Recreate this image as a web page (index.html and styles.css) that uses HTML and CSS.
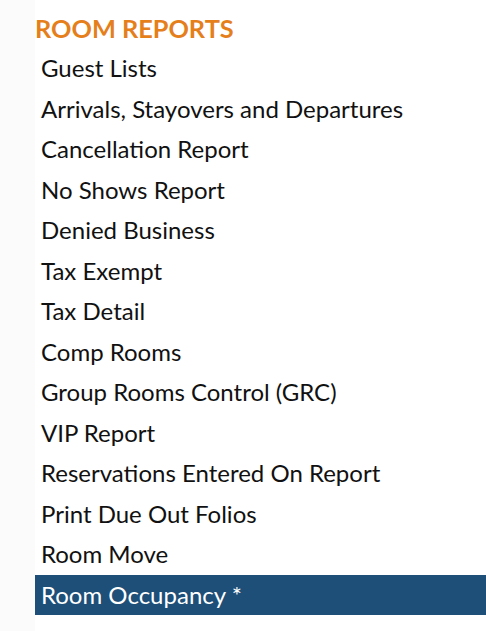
FILE: index.html
```html
<!DOCTYPE html>
<html>
<head>
  <meta name="viewport" content="width=device-width, initial-scale=1">
  <title>Room Reports</title>
  <link rel="stylesheet" href="styles.css">
</head>
<body>
  <div class="gutter"></div>
  <div class="reports">
    <h2 class="reports-title">ROOM REPORTS</h2>
    <ul class="report-list">
      <li class="report-item">Guest Lists</li>
      <li class="report-item">Arrivals, Stayovers and Departures</li>
      <li class="report-item">Cancellation Report</li>
      <li class="report-item">No Shows Report</li>
      <li class="report-item">Denied Business</li>
      <li class="report-item">Tax Exempt</li>
      <li class="report-item">Tax Detail</li>
      <li class="report-item">Comp Rooms</li>
      <li class="report-item">Group Rooms Control (GRC)</li>
      <li class="report-item">VIP Report</li>
      <li class="report-item">Reservations Entered On Report</li>
      <li class="report-item">Print Due Out Folios</li>
      <li class="report-item">Room Move</li>
      <li class="report-item active">Room Occupancy *</li>
    </ul>
  </div>
</body>
</html>
```
FILE: styles.css
```css
html, body {margin: 0; padding: 0; background: #fff;}
body {display: flex; min-height: 631px; font-family: Lato, "Liberation Sans", sans-serif;}

.gutter {width: 35px; flex-shrink: 0; background: #fbfbfb;}
.reports {flex: 1; padding-top: 8px;}

.reports-title {margin: 0; height: 40px; line-height: 40px; font-size: 25.3px; font-weight: 700; color: #e57f1c;}

.report-list {list-style: none; margin: 0; padding: 0;}
.report-item {height: 40.5px; line-height: 40.5px; padding-left: 6px; font-size: 24px; color: #111;}
.report-item.active {background: #1d4f79; color: #fff;}
```
